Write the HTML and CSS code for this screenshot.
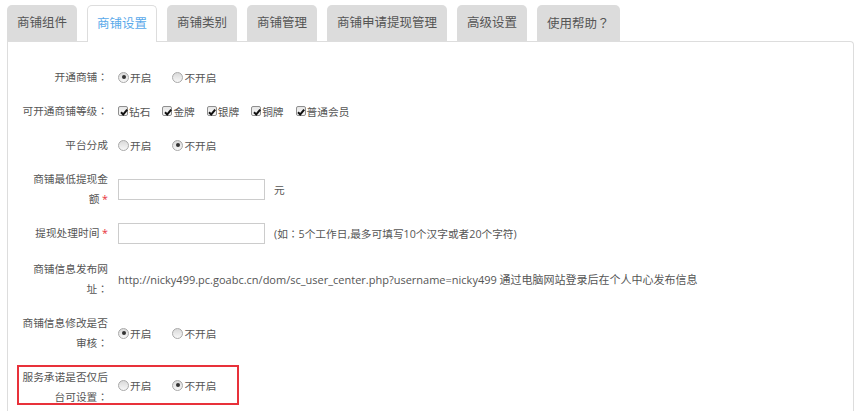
FILE: index.html
```html
<!DOCTYPE html>
<html lang="zh-CN">
<head>
<meta charset="utf-8">
<title>商铺设置</title>
<link rel="stylesheet" href="styles.css">
</head>
<body>
<div class="page">
  <ul class="tabs">
    <li class="tab">商铺组件</li>
    <li class="tab active">商铺设置</li>
    <li class="tab">商铺类别</li>
    <li class="tab">商铺管理</li>
    <li class="tab">商铺申请提现管理</li>
    <li class="tab">高级设置</li>
    <li class="tab">使用帮助<span class="p" lang="zh-TW">？</span></li>
  </ul>
  <div class="panel">
    <div class="row">
      <div class="label">开通商铺<span class="p" lang="zh-TW">：</span></div>
      <div class="field">
        <span class="opt"><i class="radio on"></i>开启</span>
        <span class="opt"><i class="radio"></i>不开启</span>
      </div>
    </div>
    <div class="row">
      <div class="label">可开通商铺等级<span class="p" lang="zh-TW">：</span></div>
      <div class="field">
        <span class="chk"><i class="box"><svg viewBox="0 0 10 10"><path d="M2 5.2 L4.2 7.4 L8.2 2.6" /></svg></i>钻石</span>
        <span class="chk"><i class="box"><svg viewBox="0 0 10 10"><path d="M2 5.2 L4.2 7.4 L8.2 2.6" /></svg></i>金牌</span>
        <span class="chk"><i class="box"><svg viewBox="0 0 10 10"><path d="M2 5.2 L4.2 7.4 L8.2 2.6" /></svg></i>银牌</span>
        <span class="chk"><i class="box"><svg viewBox="0 0 10 10"><path d="M2 5.2 L4.2 7.4 L8.2 2.6" /></svg></i>铜牌</span>
        <span class="chk"><i class="box"><svg viewBox="0 0 10 10"><path d="M2 5.2 L4.2 7.4 L8.2 2.6" /></svg></i>普通会员</span>
      </div>
    </div>
    <div class="row">
      <div class="label">平台分成</div>
      <div class="field">
        <span class="opt"><i class="radio"></i>开启</span>
        <span class="opt"><i class="radio on"></i>不开启</span>
      </div>
    </div>
    <div class="row tall">
      <div class="label">商铺最低提现金额&nbsp;<span class="req">*</span></div>
      <div class="field">
        <span class="input"></span><span class="unit">元</span>
      </div>
    </div>
    <div class="row">
      <div class="label">提现处理时间&nbsp;<span class="req">*</span></div>
      <div class="field">
        <span class="input"></span><span class="unit">(如<span class="p" lang="zh-TW">：</span>5个工作日,最多可填写10个汉字或者20个字符)</span>
      </div>
    </div>
    <div class="row tall low">
      <div class="label">商铺信息发布网址<span class="p" lang="zh-TW">：</span></div>
      <div class="field">
        <span class="text">http://nicky499.pc.goabc.cn/dom/sc_user_center.php?username=nicky499 通过电脑网站登录后在个人中心发布信息</span>
      </div>
    </div>
    <div class="row tall">
      <div class="label">商铺信息修改是否审核<span class="p" lang="zh-TW">：</span></div>
      <div class="field">
        <span class="opt"><i class="radio on"></i>开启</span>
        <span class="opt"><i class="radio"></i>不开启</span>
      </div>
    </div>
    <div class="row marked">
      <div class="label">服务承诺是否仅后台可设置<span class="p" lang="zh-TW">：</span></div>
      <div class="field">
        <span class="opt"><i class="radio"></i>开启</span>
        <span class="opt"><i class="radio on"></i>不开启</span>
      </div>
    </div>
  </div>
</div>
</body>
</html>
```
FILE: styles.css
```css
* { box-sizing: border-box; }
html, body { margin: 0; padding: 0; background: #fff; }
body {
  font-family: "Open Sans", "Noto Sans CJK SC", sans-serif;
  color: #555;
  font-size: 10.7px;
  text-spacing-trim: space-all;
}
.p { font-family: "Noto Sans CJK TC", sans-serif; }
.page { padding: 5px 0 0 7px; }
.tabs {
  list-style: none;
  margin: 0;
  padding: 0;
  display: flex;
  gap: 10px;
  height: 36px;
  position: relative;
  z-index: 1;
}
.tab {
  height: 36px;
  padding: 0 10px;
  background: #dcdcdc;
  border-radius: 5px 5px 0 0;
  font-size: 12.5px;
  line-height: 36px;
  color: #555;
  white-space: nowrap;
}
.tab.active {
  background: #fff;
  color: #5aa9ea;
  border: 1px solid #ddd;
  border-bottom: none;
  height: 37px;
  line-height: 35px;
  padding: 0 9px;
}
.panel {
  width: 847px;
  height: 380px;
  border: 1px solid #ddd;
  border-bottom: none;
  border-radius: 0 4px 0 0;
  padding: 18px 0 0 9px;
}
.row {
  display: flex;
  align-items: center;
  min-height: 34px;
  border: 2px solid transparent;
}
.row.tall { min-height: 54px; }
.row.low { margin-top: 2px; }
.row.marked {
  border-color: #e8313a;
  width: 222px;
  height: 40px;
  min-height: 0;
  margin-top: 5px;
}
.row.marked .label { align-self: flex-start; }
.label {
  width: 89px;
  flex: none;
  text-align: right;
  line-height: 20px;
  color: #555;
}
.req { color: #e8313a; }
.field {
  display: flex;
  align-items: center;
  margin-left: 10px;
  white-space: nowrap;
  color: #555;
}
.opt {
  display: inline-flex;
  align-items: center;
  margin-right: 21px;
}
.radio {
  display: inline-block;
  position: relative;
  width: 11px;
  height: 11px;
  border: 1px solid #a9a9a9;
  border-radius: 50%;
  background: linear-gradient(#d9d9d9, #f8f8f8);
  margin-right: 1px;
}
.radio.on::after {
  content: "";
  position: absolute;
  left: 2.5px;
  top: 2.5px;
  width: 4px;
  height: 4px;
  border-radius: 50%;
  background: #333;
}
.chk {
  display: inline-flex;
  align-items: center;
  margin-right: 12px;
}
.box {
  display: inline-block;
  width: 10px;
  height: 10px;
  border: 1px solid #8f8f8f;
  border-radius: 2px;
  background: linear-gradient(#e6e6e6, #fafafa);
  margin-right: 1px;
  position: relative;
}
.box svg {
  position: absolute;
  left: -0.5px;
  top: -0.5px;
  width: 10px;
  height: 10px;
}
.box path {
  fill: none;
  stroke: #111;
  stroke-width: 2;
}
.input {
  display: inline-block;
  width: 147px;
  height: 21px;
  border: 1px solid #ccc;
  background: #fff;
}
.unit { margin-left: 9px; }
.text { color: #555; font-size: 11px; }
```
